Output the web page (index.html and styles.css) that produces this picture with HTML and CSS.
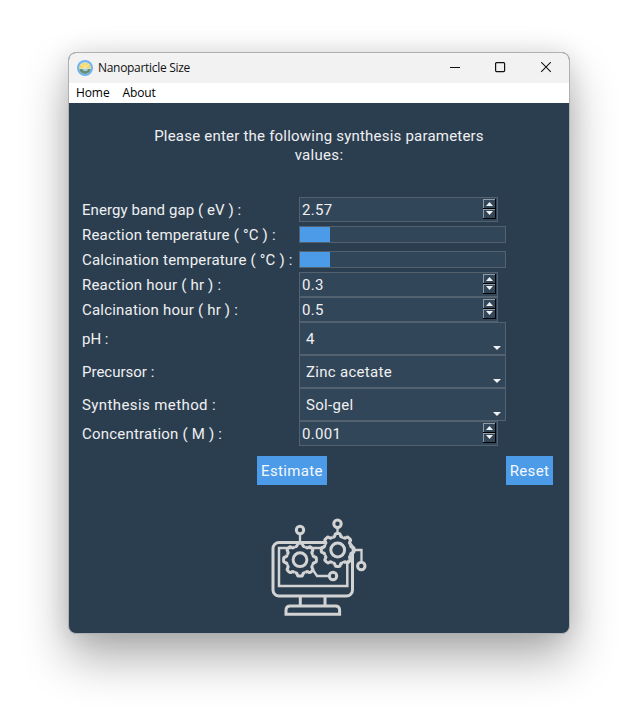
FILE: index.html
```html
<!DOCTYPE html>
<html lang="en">
<head>
<meta charset="utf-8">
<title>Nanoparticle Size</title>
<link rel="stylesheet" href="styles.css">
</head>
<body>
<main class="window">
  <header class="titlebar">
    <svg class="app-icon" width="16" height="16" viewBox="0 0 16 16">
      <circle cx="8" cy="8" r="8" fill="#6eb4f2"/>
      <circle cx="8" cy="8" r="6" fill="#d9e3c5"/>
      <path d="M2.5 8a5.5 5 0 0 1 11 0z" fill="#f3d568"/>
      <path d="M8 8V3M8 8L4 4M8 8l4-4" stroke="#fff3b0" stroke-width=".8"/>
      <path d="M2.4 9h11.2a5.6 5 0 0 1-11.2 0z" fill="#668f78"/>
      <path d="M5 9h6l-1 2H7z" fill="#a9cbd9"/>
    </svg>
    <h1 class="title">Nanoparticle Size</h1>
    <svg class="controls" width="102" height="12" viewBox="0 0 102 12" fill="none" stroke="#111">
      <path d="M0 5.500h10"/>
      <rect x="45.600" y=".6" width="9" height="9" rx="1" stroke-width="1.200"/>
      <path d="M91.200.2l9.600 9.600M100.800.2l-9.600 9.600" stroke-width="1.100"/>
    </svg>
  </header>
  <nav class="menu"><span class="home">Home</span><span class="about">About</span></nav>
  <section class="content">
    <p class="intro"><span class="intro-line">Please enter the following synthesis parameters</span><br>values:</p>
    <div class="form">
      <div class="row"><label><span class="l1">Energy band gap ( eV ) :</span></label><div class="field spin">2.57<svg class="arrows" width="13" height="20"><use href="#spinner"/></svg></div></div>
      <div class="row"><label><span class="l2">Reaction temperature ( °C ) :</span></label><div class="field slider"><i></i></div></div>
      <div class="row"><label><span class="l3">Calcination temperature ( °C ) :</span></label><div class="field slider"><i></i></div></div>
      <div class="row"><label><span class="l4">Reaction hour ( hr ) :</span></label><div class="field spin">0.3<svg class="arrows" width="13" height="20"><use href="#spinner"/></svg></div></div>
      <div class="row"><label><span class="l5">Calcination hour ( hr ) :</span></label><div class="field spin">0.5<svg class="arrows" width="13" height="20"><use href="#spinner"/></svg></div></div>
      <div class="row tall"><label><span class="l6">pH :</span></label><div class="field combo">4<svg class="caret" width="8" height="4"><path d="M0 0h8L4 4z"/></svg></div></div>
      <div class="row tall"><label><span class="l7">Precursor :</span></label><div class="field combo"><span class="zinc">Zinc acetate</span><svg class="caret" width="8" height="4"><path d="M0 0h8L4 4z"/></svg></div></div>
      <div class="row tall"><label><span class="l8">Synthesis method :</span></label><div class="field combo"><span class="sol">Sol-gel</span><svg class="caret" width="8" height="4"><path d="M0 0h8L4 4z"/></svg></div></div>
      <div class="row"><label><span class="l9">Concentration ( M ) :</span></label><div class="field spin">0.001<svg class="arrows" width="13" height="20"><use href="#spinner"/></svg></div></div>
    </div>
    <div class="actions"><button class="estimate">Estimate</button><button class="reset">Reset</button></div>
    <svg class="art" width="98" height="102" viewBox="270 516 98 102" fill="none" stroke="#d3d3d3" stroke-width="3">
      <rect x="273" y="542.500" width="79.500" height="53.500" rx="6"/>
      <rect x="279" y="548" width="68.300" height="38" stroke-width="2.500"/>
      <path d="M300.300 597v9M325 597v9M286 614.300v-4q0-4.300 4.300-4.300h45q4.300 0 4.300 4.300v4z"/>
      <path d="M300 534v10M337.500 527v8M353 550h8.500v12M313 570l4 6h12" stroke-width="2.300"/>
      <g transform="translate(300 559.700)"><use href="#gear"/></g>
      <g transform="translate(337.700 550)"><use href="#gear"/></g>
      <g fill="#2b3e50"><circle cx="300" cy="530" r="3.700"/><circle cx="337.500" cy="523.700" r="3.700"/><circle cx="361.300" cy="566" r="3.700"/><circle cx="333" cy="576" r="3.700"/></g>
    </svg>
  </section>
</main>
<svg class="defs" width="0" height="0">
  <defs>
    <g id="spinner">
      <path d="M0 0h13v20H0z" fill="#000"/>
      <path d="M0 0h12v9H0zM0 10h12v9H0z" fill="#8f9ca8"/>
      <path d="M1 1h11v8H1zM1 11h11v8H1z" fill="#32465a"/>
      <path d="M3 7L6.500 3 10 7zM3 12h7l-3.500 4z" fill="#f0f0f0"/>
    </g>
    <path id="tooth" d="M-5.400-13q2.400.3 2.700-1.800Q-2.500-16.400-1-16.400H1Q2.500-16.400 2.700-14.800 3-12.700 5.400-13"/>
    <g id="gear" stroke-linejoin="round">
      <circle r="14" fill="#2b3e50" stroke="none"/>
      <use href="#tooth"/><use href="#tooth" transform="rotate(45)"/><use href="#tooth" transform="rotate(90)"/><use href="#tooth" transform="rotate(135)"/>
      <use href="#tooth" transform="rotate(180)"/><use href="#tooth" transform="rotate(225)"/><use href="#tooth" transform="rotate(270)"/><use href="#tooth" transform="rotate(315)"/>
      <circle r="6.900"/>
    </g>
  </defs>
</svg>
</body>
</html>
```
FILE: styles.css
```css
* { box-sizing: border-box; }
body { margin: 0; height: 710px; overflow: hidden; background: #fff; }
.window {
  width: 502px; height: 582px; margin: 52px 0 0 68px;
  border: 1px solid #aeb0b2; border-radius: 8px; overflow: hidden;
  background: #2b3e50;
  box-shadow: 0 24px 48px rgba(0,0,0,.32), 0 0 24px rgba(0,0,0,.1);
}
.defs { display: block; }
.titlebar { height: 30px; display: flex; align-items: center; padding: 0 17px 1px 8px; background: #f2f2f2; }
.title { margin: 0 auto 0 5px; font: 400 12px "Open Sans", sans-serif; letter-spacing: -.3px; color: #111; }
.menu { height: 20px; display: flex; gap: 13px; padding-left: 7px; background: #fff; font: 12px/20px "Open Sans", sans-serif; letter-spacing: -.1px; color: #000; }
.content { font: 15px/19px Roboto, sans-serif; color: #f0f0f0; letter-spacing: .3px; padding-top: 24px; }
.intro { margin: 0; text-align: center; }
.intro-line { letter-spacing: .21px; }
.form { margin: 32px 0 0 13px; }
.row { height: 25px; display: flex; align-items: center; }
.row label { width: 217px; white-space: nowrap; padding-top: 1px; }
.l1 { letter-spacing: .08px; }
.l2, .l3, .l5, .l9 { letter-spacing: .2px; }
.l4 { letter-spacing: .21px; }
.l6, .l7 { letter-spacing: 0; }
.l8 { letter-spacing: .4px; }
.tall { height: 33px; }
.field { background: #32465a; border: 1px solid #54626f; display: flex; align-items: center; justify-content: space-between; }
.spin { width: 199px; height: 25px; padding: 2px 1px 0 2px; }
.arrows { margin-top: -4px; }
.slider { width: 207px; height: 17px; }
.slider i { width: 30px; height: 15px; background: #4c9be8; }
.combo { width: 207px; height: 33px; padding: 1px 4px 0 6px; }
.caret { align-self: flex-end; margin-bottom: 4px; fill: #f0f0f0; }
.actions { margin: 10px 0 0 188px; display: flex; gap: 179px; }
button { height: 29px; padding: 2px 0 0; border: 0; background: #4c9be8; color: #f4f8fc; font: inherit; letter-spacing: .35px; }
.estimate { width: 70px; }
.reset { width: 47px; }
.art { display: block; margin: 31px 0 0 201px; }
```
